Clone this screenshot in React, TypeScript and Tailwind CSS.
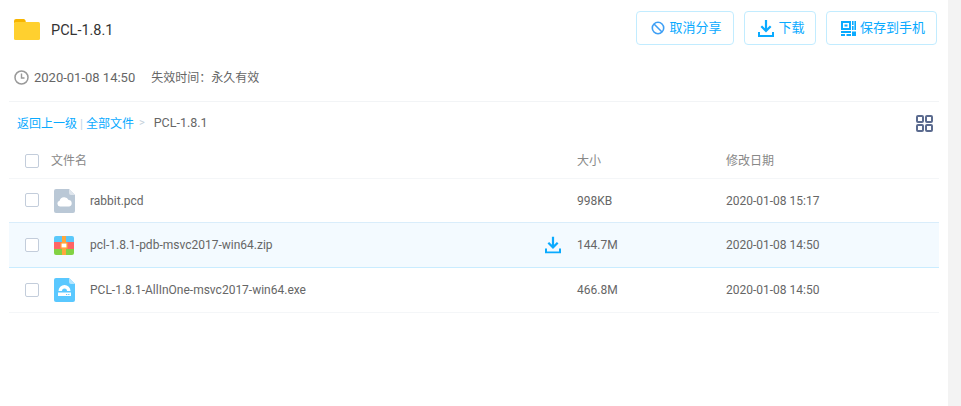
import React from "react";

function Check() {
  return <span className="block w-[14px] h-[14px] rounded-[2px] border border-[#c3cddb] bg-white shrink-0 -mt-px" />;
}

function DownloadIcon({ className }: { className?: string }) {
  return (
    <svg className={className} width="16" height="17" viewBox="0 0 16 17" fill="none">
      <path d="M8 0V10" stroke="#09AAFF" strokeWidth="2.2" />
      <path d="M3.3 6.2L8 10.9L12.7 6.2" stroke="#09AAFF" strokeWidth="2.2" />
      <path d="M1 12V16H15V12" stroke="#09AAFF" strokeWidth="2" />
    </svg>
  );
}

function BanIcon() {
  return (
    <svg width="14" height="14" viewBox="0 0 14 14" fill="none">
      <circle cx="7" cy="7" r="5.7" stroke="#3E9FF5" strokeWidth="1.6" />
      <path d="M3 3L11 11" stroke="#3E9FF5" strokeWidth="1.6" />
    </svg>
  );
}

function QrIcon() {
  return (
    <svg width="15" height="15" viewBox="0 0 15 15" fill="#09AAFF">
      <path d="M0 0H10V9H0V0ZM2 2V7H8V2H2Z" fillRule="evenodd" />
      <rect x="3.5" y="3.5" width="3" height="2" />
      <rect x="11" y="0" width="1.6" height="4" />
      <rect x="13.4" y="0" width="1.6" height="9" />
      <rect x="11" y="5" width="1.6" height="4" />
      <rect x="0" y="10" width="10" height="2" />
      <rect x="0" y="13" width="4" height="2" />
      <rect x="5.5" y="13" width="4.5" height="2" />
      <rect x="11" y="10.5" width="4" height="4.5" />
    </svg>
  );
}

function Folder() {
  return (
    <svg width="26" height="21" viewBox="0 0 26 21">
      <path d="M0 2a2 2 0 0 1 2-2h7.5a2 2 0 0 1 2 1.5L12 4H0Z" fill="#F7B500" />
      <rect x="0" y="3" width="26" height="18" rx="1.5" fill="#FFD02F" />
    </svg>
  );
}

function CloudFile() {
  return (
    <svg width="21" height="24" viewBox="0 0 21 24">
      <path d="M2 0H15L21 6V22a2 2 0 0 1-2 2H2a2 2 0 0 1-2-2V2a2 2 0 0 1 2-2Z" fill="#BAC8D6" />
      <path d="M15 0L21 6H17a2 2 0 0 1-2-2Z" fill="#DFE6ED" />
      <path d="M6 17.5a2.9 2.9 0 0 1-.4-5.7A4.8 4.8 0 0 1 14.6 11a3.3 3.3 0 0 1 .6 6.5Z" fill="#fff" />
    </svg>
  );
}

function ZipFile() {
  return (
    <svg width="20" height="19" viewBox="0 0 20 19">
      <path d="M2 0H18a2 2 0 0 1 2 2V6H0V2a2 2 0 0 1 2-2Z" fill="#5AC8FA" />
      <rect x="0" y="6" width="20" height="7" fill="#FF6464" />
      <path d="M0 13H20V17a2 2 0 0 1-2 2H2a2 2 0 0 1-2-2Z" fill="#83D243" />
      <rect x="8" y="0" width="4" height="19" fill="#FFA73C" />
      <rect x="7" y="7" width="6" height="5" fill="#fff" stroke="#FFA73C" strokeWidth="1.2" />
    </svg>
  );
}

function ExeFile() {
  return (
    <svg width="21" height="24" viewBox="0 0 21 24">
      <path d="M2 0H15L21 6V22a2 2 0 0 1-2 2H2a2 2 0 0 1-2-2V2a2 2 0 0 1 2-2Z" fill="#5AC8FF" />
      <path d="M15 0L21 6H17a2 2 0 0 1-2-2Z" fill="#B5E6FF" />
      <path d="M4.5 13a6 6 0 0 1 12 0H13a2.5 2.5 0 0 0-5 0Z" fill="#fff" />
      <path d="M4 14.5H17V18H4Z" fill="#fff" />
      <rect x="12" y="16" width="1.2" height="1" fill="#5AC8FF" />
      <rect x="14.2" y="16" width="1.2" height="1" fill="#5AC8FF" />
    </svg>
  );
}

function GridIcon() {
  return (
    <svg width="17" height="17" viewBox="0 0 17 17" fill="none" stroke="#5B6B8F" strokeWidth="2">
      <rect x="1" y="1" width="6" height="6" rx="1" />
      <rect x="10" y="1" width="6" height="6" rx="1" />
      <rect x="1" y="10" width="6" height="6" rx="1" />
      <rect x="10" y="10" width="6" height="6" rx="1" />
    </svg>
  );
}

function Btn({ w, icon, label }: { w: string; icon: React.ReactNode; label: string }) {
  return (
    <div className={`${w} h-[34px] pl-[3px] flex items-center justify-center gap-[4px] rounded-[4px] border border-[#c2ecff] text-[13px] text-[#09AAFF] bg-white`}>
      {icon}
      <span>{label}</span>
    </div>
  );
}

const rows = [
  { icon: <CloudFile />, name: "rabbit.pcd", size: "998KB", date: "2020-01-08 15:17", rowClass: "h-[44px] border-[#d9edfb]" },
  { icon: <ZipFile />, name: "pcl-1.8.1-pdb-msvc2017-win64.zip", size: "144.7M", date: "2020-01-08 14:50", rowClass: "h-[45px] bg-[#f3faff] border-[#c9ecff]", active: true },
  { icon: <ExeFile />, name: "PCL-1.8.1-AllInOne-msvc2017-win64.exe", size: "466.8M", date: "2020-01-08 14:50", rowClass: "h-[45px] border-[#f4f6f8]" },
];

export default function App() {
  return (
    <div className="flex h-[406px] w-[961px] bg-white overflow-hidden font-['Roboto','Noto_Sans_CJK_SC',sans-serif] text-[12px] text-[#666]">
      <main className="w-[948px] shrink-0 pl-[9px] pr-[9px]">
        <header className="h-[57px] pt-[11px] flex justify-between">
          <div className="flex items-start pl-[5px] pt-[8px]">
            <Folder />
            <h1 className="ml-[11px] mt-[2px] text-[14.5px] leading-[20px] text-[#333]">PCL-1.8.1</h1>
          </div>
          <div className="flex gap-[10px] pr-[2px]">
            <Btn w="w-[98px]" icon={<BanIcon />} label="取消分享" />
            <Btn w="w-[72px]" icon={<DownloadIcon />} label="下载" />
            <Btn w="w-[111px]" icon={<QrIcon />} label="保存到手机" />
          </div>
        </header>
        <div className="h-[45px] border-b border-[#f2f4f6] flex items-start pl-[5px] pt-[11px] leading-[20px]">
          <svg width="15" height="15" viewBox="0 0 15 15" fill="none" className="mt-[2px]" stroke="#999">
            <circle cx="7.5" cy="7.5" r="6.5" strokeWidth="1.5" />
            <path d="M7.5 3.5V8H10.5" strokeWidth="1.4" />
          </svg>
          <span className="ml-[5px] text-[13px]">2020-01-08 14:50</span>
          <span className="ml-[16px]">失效时间：永久有效</span>
        </div>
        <div className="h-[43px] flex items-center justify-between pl-[8px] pr-[6px]">
          <div className="flex items-center">
            <span className="text-[#09AAFF]">返回上一级</span>
            <span className="mx-[3px] text-[#c2d6e6]">|</span>
            <span className="text-[#09AAFF]">全部文件</span>
            <span className="ml-[5px] mr-[9px] text-[#c4d0da] text-[11px]">&gt;</span>
            <span className="text-[12.5px]">PCL-1.8.1</span>
          </div>
          <GridIcon />
        </div>
        <div className="h-[34px] flex items-center border-b border-[#f4f6f8] text-[#888]">
          <div className="w-[42px] pl-[16px]"><Check /></div>
          <div className="w-[526px] -mt-[2px]">文件名</div>
          <div className="w-[149px] -mt-[2px]">大小</div>
          <div className="-mt-[2px]">修改日期</div>
        </div>
        {rows.map((r) => (
          <div key={r.name} className={`flex items-center border-b ${r.rowClass}`}>
            <div className="w-[42px] pl-[16px]"><Check /></div>
            <div className="w-[39px] flex justify-start pl-[3px]">{r.icon}</div>
            <div className="w-[487px] relative flex items-center">
              <span>{r.name}</span>
              {r.active && <DownloadIcon className="absolute left-[455px] top-1/2 -translate-y-1/2" />}
            </div>
            <div className="w-[149px]">{r.size}</div>
            <div>{r.date}</div>
          </div>
        ))}
      </main>
      <aside className="flex-1 bg-[#f3f3f3]" />
    </div>
  );
}
